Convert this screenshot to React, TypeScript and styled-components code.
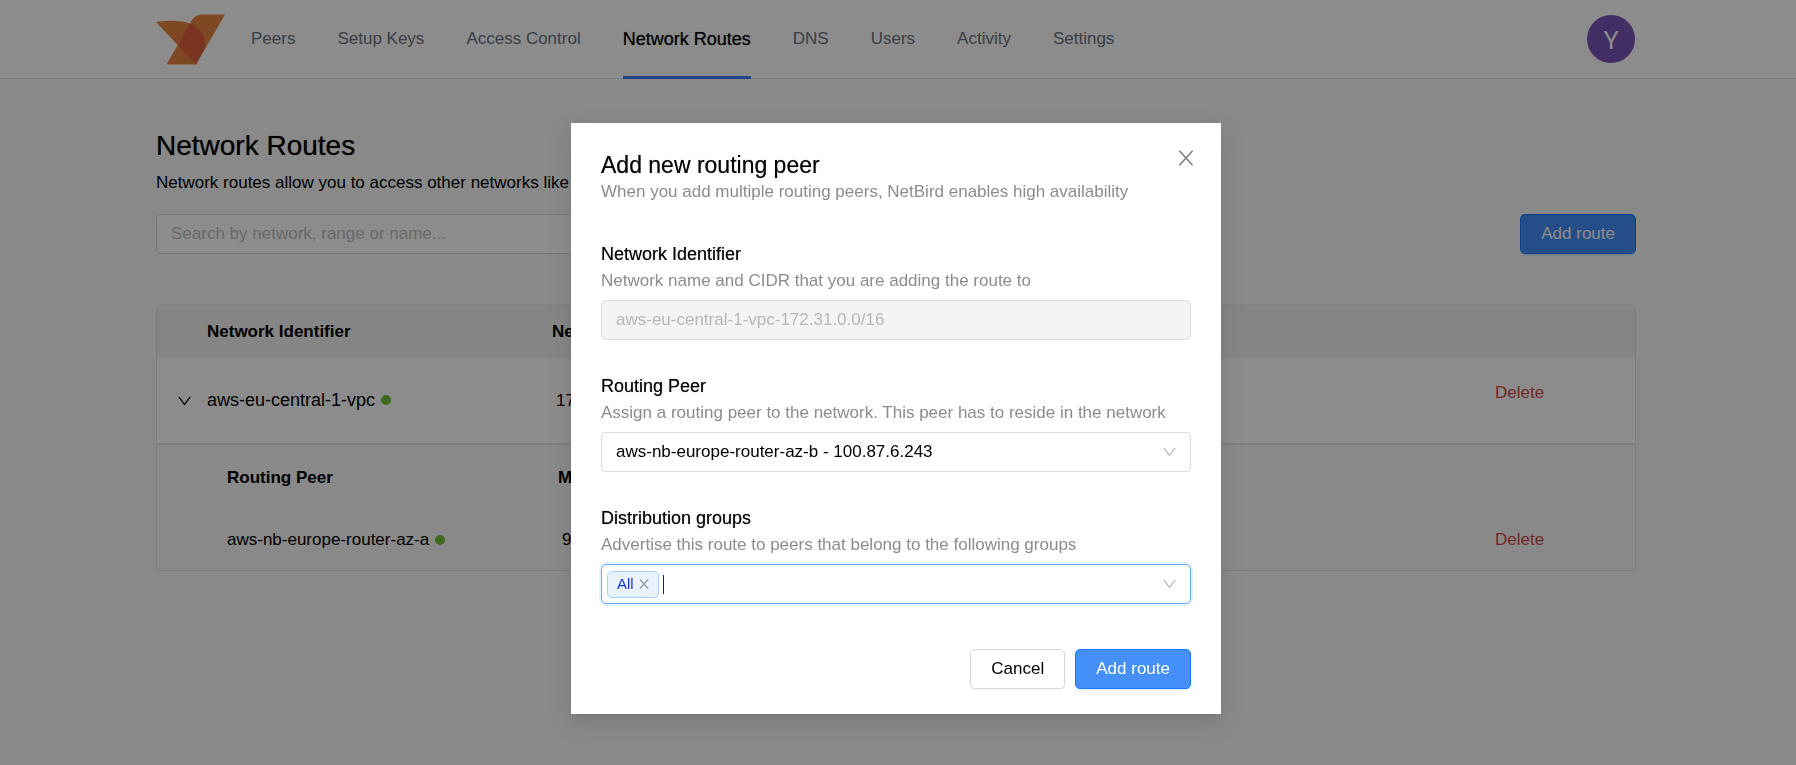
import React from "react";
import styled, { createGlobalStyle } from "styled-components";

const GlobalStyle = createGlobalStyle`
  *, *::before, *::after { box-sizing: border-box; }
  html, body { margin: 0; }
  body {
    background: #f9fafb;
    color: #000;
    font: 400 17px/22px "Liberation Sans", Arial, sans-serif;
  }
  button, input, select { font: inherit; color: inherit; margin: 0; }
  h1, h2, p { margin: 0; font-weight: 400; }
`;

const softWeight = "0 0 1px rgba(0, 0, 0, 0.5)";

const Page = styled.div`
  min-height: 100vh;
`;

const Header = styled.header`
  display: flex;
  align-items: center;
  height: 79px;
  padding: 0 161px 0 156px;
  background: #fff;
  border-bottom: 1px solid #e5e7eb;
`;

const Logo = styled.svg`
  display: block;
  width: 69px;
  height: 51px;
  margin-right: 26px;
`;

const Nav = styled.nav`
  display: flex;
  align-self: stretch;
  flex: 1;
  gap: 42px;
`;

const NavLink = styled.a<{ $active?: boolean }>`
  display: flex;
  align-items: center;
  height: 79px;
  padding-top: 2px;
  border-bottom: 3px solid ${(p) => (p.$active ? "#3b82f6" : "transparent")};
  color: ${(p) => (p.$active ? "#000" : "#6b7280")};
  font-size: ${(p) => (p.$active ? 18 : 17)}px;
  text-shadow: ${(p) => (p.$active ? softWeight : "none")};
  text-decoration: none;
  white-space: nowrap;
`;

const Avatar = styled.button`
  width: 48px;
  height: 48px;
  padding: 0;
  border: 0;
  border-radius: 50%;
  background: #7a56ba;
  color: #fff;
  font-family: "Noto Sans", sans-serif;
  font-size: 26px;
`;

const Content = styled.main`
  display: flex;
  flex-direction: column;
  padding: 49px 160px 50px 156px;
`;

const PageTitle = styled.h1`
  font-size: 28px;
  line-height: 36px;
  text-shadow: ${softWeight};
`;

const Lead = styled.p`
  padding-top: 8px;
`;

const Toolbar = styled.div`
  display: flex;
  justify-content: space-between;
  margin: 20px 0 50px;
`;

const TextInput = styled.input`
  width: 100%;
  height: 40px;
  padding: 0 14px;
  border: 1px solid #d9d9d9;
  border-radius: 5px;
  background: #fff;
  &::placeholder { color: #bfbfbf; opacity: 1; }
  &:disabled { background: #f4f4f4; color: #b8b8b8; }
`;

const SearchBox = styled.div`
  width: 580px;
`;

const Button = styled.button<{ $primary?: boolean }>`
  height: 40px;
  padding: 0 20px;
  border: 1px solid ${(p) => (p.$primary ? "#1677ff" : "#d9d9d9")};
  border-radius: 5px;
  background: ${(p) => (p.$primary ? "#448ff8" : "#fff")};
  color: ${(p) => (p.$primary ? "#fff" : "#000")};
  box-shadow: 0 2px 0 ${(p) => (p.$primary ? "rgba(5, 145, 255, 0.1)" : "rgba(0, 0, 0, 0.02)")};
  white-space: nowrap;
`;

const TableCard = styled.div`
  overflow: hidden;
  border: 1px solid #e5e7eb;
  border-radius: 5px;
`;

const RouteTable = styled.table<{ $nested?: boolean }>`
  width: 100%;
  table-layout: fixed;
  border-collapse: collapse;
  background: ${(p) => (p.$nested ? "#f9f9f9" : "#fff")};
  border-top: ${(p) => (p.$nested ? "2px solid #e8e8e8" : "0")};
  text-align: left;

  th {
    height: ${(p) => (p.$nested ? 66 : 53)}px;
    padding: 0;
    background: ${(p) => (p.$nested ? "#f9f9f9" : "#f3f3f4")};
    font-weight: 700;
  }
  td {
    height: ${(p) => (p.$nested ? 60 : 85)}px;
    padding: 0;
  }
  th:nth-child(2), td:nth-child(2) { padding-left: ${(p) => (p.$nested ? 20 : 0)}px; }
  th:nth-child(3) { padding-left: ${(p) => (p.$nested ? 6 : 0)}px; }
  td:nth-child(3) { padding-left: ${(p) => (p.$nested ? 10 : 4)}px; }
  td:last-child { padding-bottom: ${(p) => (p.$nested ? 0 : 16)}px; }
`;

const Status = styled.span<{ $large?: boolean }>`
  display: inline-flex;
  align-items: center;
  gap: 6px;
  font-size: ${(p) => (p.$large ? 18 : 17)}px;
  &::after {
    content: "";
    width: 10px;
    height: 10px;
    border-radius: 50%;
    background: #72c23a;
  }
`;

const ExpandButton = styled.button`
  display: block;
  margin-left: 21px;
  padding: 0;
  border: 0;
  background: none;
  line-height: 0;
`;

const DeleteButton = styled.button`
  padding: 0;
  border: 0;
  background: none;
  color: #cf4a4a;
`;

const Overlay = styled.div`
  position: fixed;
  inset: 0;
  padding: 123px 4px 0 0;
  background: rgba(0, 0, 0, 0.45);
`;

const Dialog = styled.section`
  position: relative;
  max-width: 650px;
  margin: 0 auto;
  padding: 30px 30px 25px;
  background: #fff;
  box-shadow: 0 6px 16px rgba(0, 0, 0, 0.08), 0 3px 6px -4px rgba(0, 0, 0, 0.12),
    0 9px 28px 8px rgba(0, 0, 0, 0.05);
`;

const DialogTitle = styled.h2`
  font-size: 23px;
  line-height: 24px;
  text-shadow: ${softWeight};
`;

const Hint = styled.p`
  color: #8c8c8c;
  line-height: 29px;
`;

const CloseButton = styled.button`
  position: absolute;
  top: 27px;
  right: 27px;
  padding: 0;
  border: 0;
  background: none;
  color: #7c7c7c;
  line-height: 0;
`;

const Form = styled.form`
  display: flex;
  flex-direction: column;
  gap: 34px;
  padding-top: 36px;
`;

const FieldBox = styled.div`
  display: flex;
  flex-direction: column;
`;

const FieldLabel = styled.label`
  font-size: 18px;
  line-height: 24px;
  text-shadow: ${softWeight};
`;

const FieldHint = styled(Hint)`
  padding-bottom: 5px;
`;

const SelectBox = styled.div`
  display: grid;
  align-items: center;
  > * { grid-area: 1 / 1; }
  > svg { justify-self: end; margin-right: 15px; pointer-events: none; }
`;

const Select = styled.select`
  appearance: none;
  height: 40px;
  padding: 0 14px;
  border: 1px solid #d9d9d9;
  border-radius: 5px;
  background: #fff;
`;

const TagBox = styled.div`
  display: flex;
  align-items: center;
  gap: 4px;
  height: 40px;
  padding: 0 14px 0 5px;
  border: 1px solid #69a9fb;
  border-radius: 5px;
  box-shadow: 0 0 0 2px rgba(5, 145, 255, 0.1);
`;

const Tag = styled.span`
  display: flex;
  align-items: center;
  gap: 5px;
  height: 27px;
  padding: 0 9px;
  border: 1px solid #abd0fc;
  border-radius: 5px;
  background: #e9f3fe;
  color: #1237cc;
  font-size: 15px;
`;

const TagRemove = styled.button`
  padding: 0;
  border: 0;
  background: none;
  color: #808890;
  line-height: 0;
`;

const Caret = styled.span`
  width: 1px;
  height: 19px;
  background: #222;
`;

const TagInput = styled.input`
  flex: 1;
  min-width: 0;
  padding: 0;
  border: 0;
  outline: 0;
  background: none;
`;

const Actions = styled.div`
  display: flex;
  justify-content: flex-end;
  gap: 10px;
  padding-top: 11px;
`;

const Chevron = ({ color = "#000" }: { color?: string }) => (
  <svg width="13" height="10" viewBox="0 0 13 10" fill="none" stroke={color} aria-hidden="true">
    <path d="M.8 .8 6.5 8.4 12.2 .8" strokeWidth="1.2" />
  </svg>
);

const Cross = ({ size, weight }: { size: number; weight: number }) => (
  <svg width={size} height={size} viewBox="0 0 16 16" fill="none" stroke="currentColor" aria-hidden="true">
    <path d="M1.4 .7 14.6 15.3M14.6 .7 1.4 15.3" strokeWidth={weight} />
  </svg>
);

const links = ["Peers", "Setup Keys", "Access Control", "Network Routes", "DNS", "Users", "Activity", "Settings"];

const Column = styled.col<{ $width?: number }>`
  width: ${(p) => (p.$width ? `${p.$width}px` : "auto")};
`;

const Columns = () => (
  <colgroup>
    <Column $width={50} />
    <Column $width={345} />
    <Column />
    <Column $width={140} />
  </colgroup>
);

export default function App() {
  return (
    <Page>
      <GlobalStyle />
      <Header>
        <Logo viewBox="0 0 69 51" role="img" aria-label="NetBird">
          <path d="M0 8C14 6 25 6 34 9.500C45 14 49 22 49.500 32L40 50.500Z" fill="#e5853f" />
          <path d="M34 9.500C37 3 41 .5 47 .5H69L40 50.500H10.500Z" fill="#e5853f" />
          <path d="M34 9.500C45 14 49 22 49.500 32L40 50.500 22 31Z" fill="#e0603f" />
        </Logo>
        <Nav>
          {links.map((name) => (
            <NavLink key={name} href="#" $active={name === "Network Routes"}>
              {name}
            </NavLink>
          ))}
        </Nav>
        <Avatar type="button" aria-label="Account">Y</Avatar>
      </Header>

      <Content>
        <PageTitle>Network Routes</PageTitle>
        <Lead>Network routes allow you to access other networks like</Lead>
        <Toolbar>
          <SearchBox>
            <TextInput aria-label="Search" placeholder="Search by network, range or name..." />
          </SearchBox>
          <Button type="button" $primary>Add route</Button>
        </Toolbar>
        <TableCard>
          <RouteTable>
            <Columns />
            <thead>
              <tr><th /><th>Network Identifier</th><th>Network</th><th /></tr>
            </thead>
            <tbody>
              <tr>
                <td><ExpandButton type="button" aria-label="Collapse row"><Chevron /></ExpandButton></td>
                <td><Status $large>aws-eu-central-1-vpc</Status></td>
                <td>172.31.0.0/16</td>
                <td><DeleteButton type="button">Delete</DeleteButton></td>
              </tr>
            </tbody>
          </RouteTable>
          <RouteTable $nested>
            <Columns />
            <thead>
              <tr><th /><th>Routing Peer</th><th>Metric</th><th /></tr>
            </thead>
            <tbody>
              <tr>
                <td />
                <td><Status>aws-nb-europe-router-az-a</Status></td>
                <td>9999</td>
                <td><DeleteButton type="button">Delete</DeleteButton></td>
              </tr>
            </tbody>
          </RouteTable>
        </TableCard>
      </Content>

      <Overlay>
        <Dialog role="dialog" aria-labelledby="dialog-title">
          <DialogTitle id="dialog-title">Add new routing peer</DialogTitle>
          <Hint>When you add multiple routing peers, NetBird enables high availability</Hint>
          <CloseButton type="button" aria-label="Close"><Cross size={16} weight={1.5} /></CloseButton>
          <Form>
            <FieldBox>
              <FieldLabel htmlFor="network">Network Identifier</FieldLabel>
              <FieldHint>Network name and CIDR that you are adding the route to</FieldHint>
              <TextInput id="network" disabled defaultValue="aws-eu-central-1-vpc-172.31.0.0/16" />
            </FieldBox>
            <FieldBox>
              <FieldLabel htmlFor="peer">Routing Peer</FieldLabel>
              <FieldHint>Assign a routing peer to the network. This peer has to reside in the network</FieldHint>
              <SelectBox>
                <Select id="peer">
                  <option>aws-nb-europe-router-az-b - 100.87.6.243</option>
                </Select>
                <Chevron color="#b8b8b8" />
              </SelectBox>
            </FieldBox>
            <FieldBox>
              <FieldLabel htmlFor="groups">Distribution groups</FieldLabel>
              <FieldHint>Advertise this route to peers that belong to the following groups</FieldHint>
              <TagBox>
                <Tag>
                  All
                  <TagRemove type="button" aria-label="Remove All"><Cross size={10} weight={1.8} /></TagRemove>
                </Tag>
                <Caret />
                <TagInput id="groups" />
                <Chevron color="#b8b8b8" />
              </TagBox>
            </FieldBox>
            <Actions>
              <Button type="button">Cancel</Button>
              <Button type="submit" $primary>Add route</Button>
            </Actions>
          </Form>
        </Dialog>
      </Overlay>
    </Page>
  );
}
